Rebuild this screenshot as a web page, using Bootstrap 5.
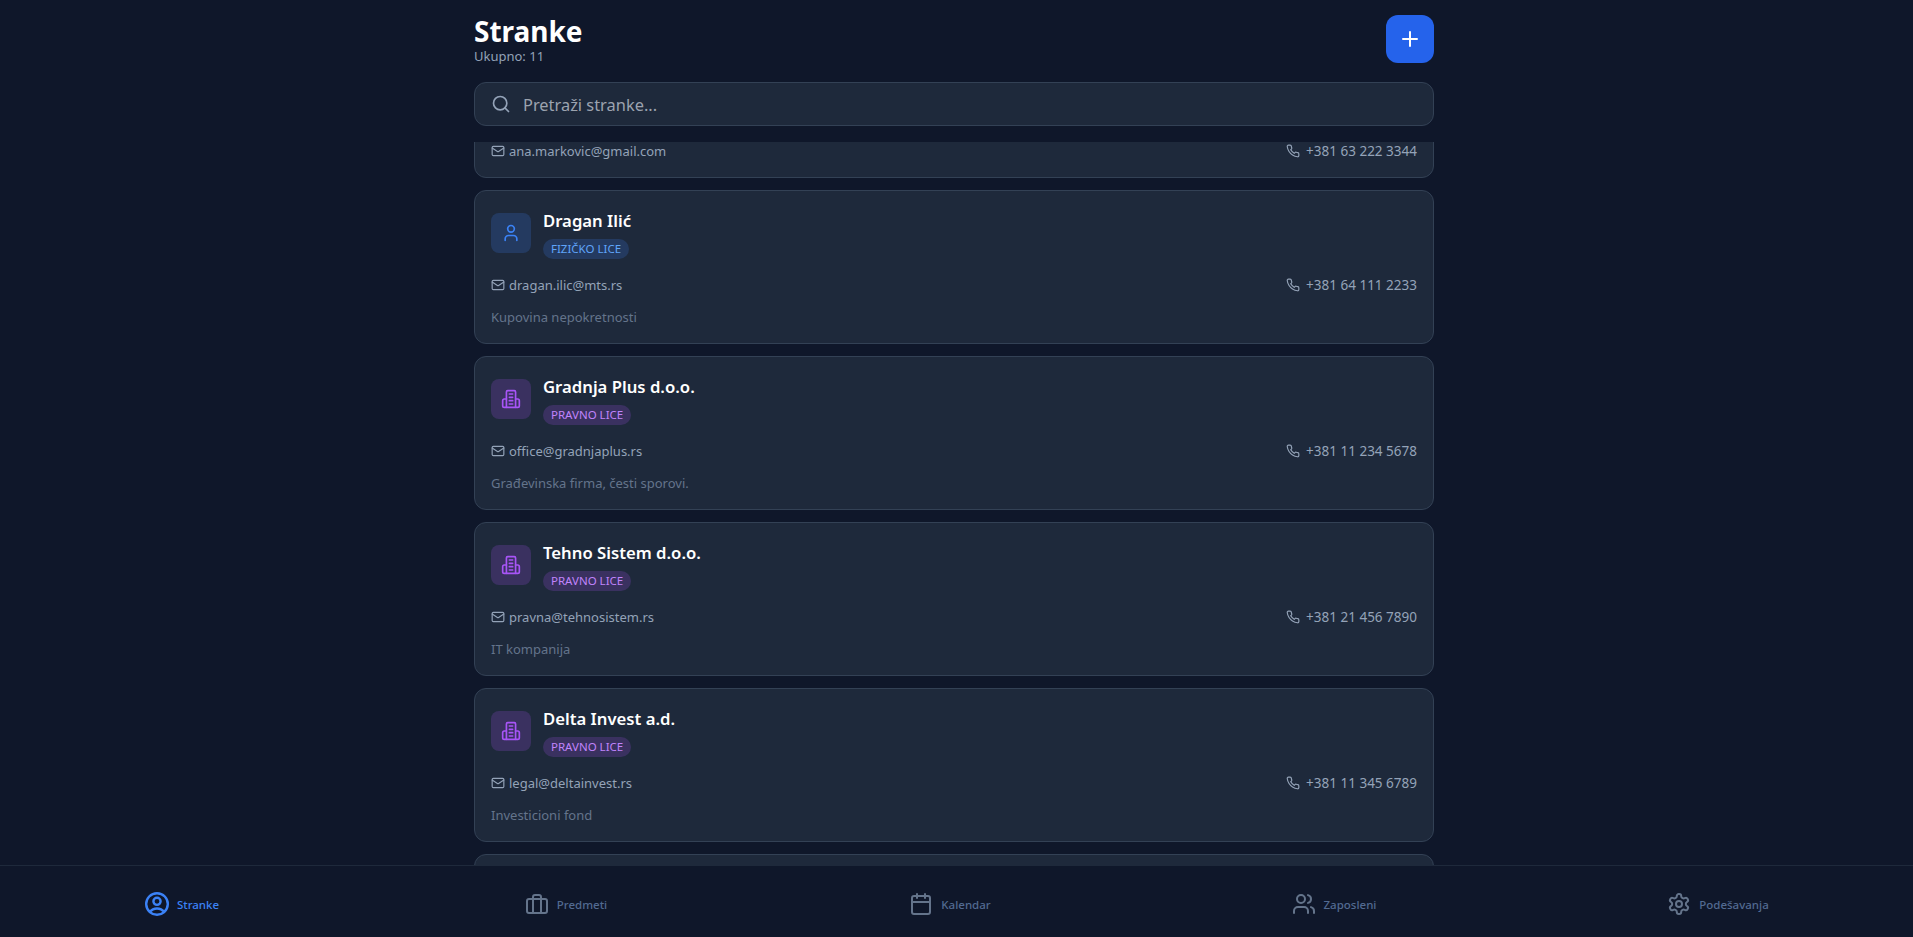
<!doctype html>
<html lang="sr">
<head>
  <meta charset="utf-8">
  <meta name="viewport" content="width=device-width, initial-scale=1">
  <title>Stranke</title>
  <link href="https://cdn.jsdelivr.net/npm/bootstrap@5.3.5/dist/css/bootstrap.min.css" rel="stylesheet">
  <style>
    html, body { height: 100%; overflow: hidden; }
    body { background: #0f172a; font-family: "Noto Sans", "Open Sans", sans-serif; color: #fff; }
    .ico { fill: none; stroke: currentColor; stroke-width: 2; stroke-linecap: round; stroke-linejoin: round; flex-shrink: 0; }

    .app-shell { height: 937px; }
    .app-main { padding-right: 5px; min-height: 0; }
    .app-column { width: 960px; }

    .page-head { padding-top: 14px; height: 82px; flex-shrink: 0; }
    .page-title { font-size: 28px; font-weight: 700; line-height: 34px; margin: 0; }
    .page-count { font-size: 13px; line-height: 17px; color: #94a3b8; }
    .add-btn { width: 48px; height: 48px; margin-top: 1px; background: #2563eb; border: 0; border-radius: 12px; color: #fff; }
    .add-btn:hover { background: #2563eb; color: #fff; }

    .search-box { margin-bottom: 16px; flex-shrink: 0; }
    .search-input.form-control { height: 44px; padding-left: 48px; font-size: 16.4px; background: #1e293b; border: 1px solid #334155; border-radius: 12px; color: #fff; }
    .search-input.form-control::placeholder { color: #9ca3af; opacity: 1; }
    .search-ico { left: 17px; top: 12px; color: #94a3b8; }

    .client-list { overflow-y: auto; scrollbar-width: none; min-height: 0; }
    .client-card { background: #1e293b; border: 1px solid #334155; border-radius: 12px; padding: 16px; margin-bottom: 12px; }
    .client-blank { height: 154px; }
    .client-avatar { width: 40px; height: 40px; border-radius: 8px; }
    .avatar-person { background: rgba(59, 130, 246, .2); color: #3b82f6; }
    .avatar-company { background: rgba(168, 85, 247, .2); color: #a855f7; }
    .client-name { font-size: 16.7px; font-weight: 600; line-height: 27px; margin: 0 0 5px; color: #fff; }
    .client-type { font-size: 11.5px; line-height: 20px; height: 20px; padding: 0 8px; border-radius: 10px; text-transform: uppercase; }
    .type-person { background: rgba(59, 130, 246, .2); color: #60a5fa; }
    .type-company { background: rgba(168, 85, 247, .2); color: #c084fc; }
    .client-contact { margin-top: 16px; font-size: 13px; line-height: 20px; color: #94a3b8; }
    .client-phone { font-size: 13.5px; gap: 6px; }
    .client-note { margin-top: 12px; font-size: 13px; line-height: 20px; color: #64748b; }

    .tab-bar { height: 72px; flex-shrink: 0; background: #0f172a; border-top: 1px solid #1e293b; overflow: hidden; }
    .tab-row { width: 1920px; margin-left: -10px; height: 100%; padding-top: 4px; }
    .tab-item { width: 384px; gap: 8px; font-size: 11.5px; font-weight: 500; color: #64748b; text-decoration: none; }
    .tab-item.tab-active { color: #3b82f6; }
    .tab-item span { color: #526a91; padding-top: 2px; }
    .tab-item.tab-active span { color: #3b82f6; }
  </style>
</head>
<body>
  <svg width="0" height="0" class="position-absolute">
    <symbol id="i-plus" viewBox="0 0 24 24"><path d="M5 12h14M12 5v14"/></symbol>
    <symbol id="i-search" viewBox="0 0 24 24"><circle cx="11" cy="11" r="8"/><path d="m21 21-4.300-4.300"/></symbol>
    <symbol id="i-mail" viewBox="0 0 24 24"><rect x="2" y="4" width="20" height="16" rx="2"/><path d="m22 7-8.970 5.700a1.940 1.940 0 0 1-2.060 0L2 7"/></symbol>
    <symbol id="i-phone" viewBox="0 0 24 24"><path d="M22 16.920v3a2 2 0 0 1-2.180 2 19.790 19.790 0 0 1-8.630-3.070 19.500 19.500 0 0 1-6-6 19.790 19.790 0 0 1-3.070-8.670A2 2 0 0 1 4.110 2h3a2 2 0 0 1 2 1.720 12.840 12.840 0 0 0 .7 2.810 2 2 0 0 1-.45 2.110L8.090 9.910a16 16 0 0 0 6 6l1.270-1.270a2 2 0 0 1 2.110-.45 12.840 12.840 0 0 0 2.810.7A2 2 0 0 1 22 16.920z"/></symbol>
    <symbol id="i-user" viewBox="0 0 24 24"><path d="M19 21v-2a4 4 0 0 0-4-4H9a4 4 0 0 0-4 4v2"/><circle cx="12" cy="7" r="4"/></symbol>
    <symbol id="i-building" viewBox="0 0 24 24"><path d="M6.500 22V3.500a1.500 1.500 0 0 1 1.500-1.500h8a1.500 1.500 0 0 1 1.500 1.500V22Z"/><path d="M6.500 12H4a2 2 0 0 0-2 2v6a2 2 0 0 0 2 2h2.500"/><path d="M17.500 12H20a2 2 0 0 1 2 2v6a2 2 0 0 1-2 2h-2.500"/><path d="M10 6h4M10 10h4M10 14h4M10 18h4"/></symbol>
    <symbol id="i-circle-user" viewBox="2 2 20 20"><path d="M17.982 18.725A7.488 7.488 0 0 0 12 15.750a7.488 7.488 0 0 0-5.982 2.975m11.964 0a9 9 0 1 0-11.963 0m11.963 0A8.966 8.966 0 0 1 12 21a8.966 8.966 0 0 1-5.982-2.275M15 9.750a3 3 0 1 1-6 0 3 3 0 0 1 6 0Z"/></symbol>
    <symbol id="i-briefcase" viewBox="0 0 24 24"><rect x="2" y="7" width="20" height="14" rx="2"/><path d="M16 21V5a2 2 0 0 0-2-2h-4a2 2 0 0 0-2 2v16"/></symbol>
    <symbol id="i-calendar" viewBox="0 0 24 24"><path d="M8 2v4M16 2v4"/><rect x="3" y="4" width="18" height="18" rx="2"/><path d="M3 10h18"/></symbol>
    <symbol id="i-users" viewBox="0 0 24 24"><path d="M16 21v-2a4 4 0 0 0-4-4H6a4 4 0 0 0-4 4v2"/><circle cx="9" cy="7" r="4"/><path d="M22 21v-2a4 4 0 0 0-3-3.870"/><path d="M16 3.130a4 4 0 0 1 0 7.750"/></symbol>
    <symbol id="i-gear" viewBox="0 0 24 24"><path d="M12.220 2h-.44a2 2 0 0 0-2 2v.18a2 2 0 0 1-1 1.730l-.43.25a2 2 0 0 1-2 0l-.15-.08a2 2 0 0 0-2.730.73l-.22.38a2 2 0 0 0 .73 2.730l.15.1a2 2 0 0 1 1 1.720v.51a2 2 0 0 1-1 1.740l-.15.09a2 2 0 0 0-.73 2.730l.22.38a2 2 0 0 0 2.730.73l.15-.08a2 2 0 0 1 2 0l.43.25a2 2 0 0 1 1 1.730V20a2 2 0 0 0 2 2h.44a2 2 0 0 0 2-2v-.18a2 2 0 0 1 1-1.730l.43-.25a2 2 0 0 1 2 0l.15.08a2 2 0 0 0 2.730-.73l.22-.39a2 2 0 0 0-.73-2.730l-.15-.08a2 2 0 0 1-1-1.740v-.5a2 2 0 0 1 1-1.740l.15-.09a2 2 0 0 0 .73-2.730l-.22-.38a2 2 0 0 0-2.730-.73l-.15.08a2 2 0 0 1-2 0l-.43-.25a2 2 0 0 1-1-1.730V4a2 2 0 0 0-2-2z"/><circle cx="12" cy="12" r="3"/></symbol>
  </svg>

  <div class="app-shell d-flex flex-column">
    <main class="app-main flex-grow-1 d-flex justify-content-center">
      <div class="app-column d-flex flex-column">
        <header class="page-head d-flex justify-content-between align-items-start">
          <div>
            <h1 class="page-title">Stranke</h1>
            <div class="page-count">Ukupno: 11</div>
          </div>
          <button type="button" class="btn add-btn d-flex align-items-center justify-content-center p-0" aria-label="Dodaj">
            <svg class="ico" width="24" height="24"><use href="#i-plus"/></svg>
          </button>
        </header>

        <div class="search-box position-relative">
          <svg class="ico search-ico position-absolute" width="20" height="20"><use href="#i-search"/></svg>
          <input type="text" class="form-control search-input" placeholder="Pretraži stranke...">
        </div>

        <div class="client-list flex-grow-1" id="client-list">
          <article class="client-card">
            <div class="d-flex align-items-center">
              <div class="client-avatar avatar-person d-flex align-items-center justify-content-center">
                <svg class="ico" width="20" height="20"><use href="#i-user"/></svg>
              </div>
              <div class="ms-2 ps-1 d-flex flex-column align-items-start">
                <h2 class="client-name">Ana Marković</h2>
                <span class="client-type type-person">Fizičko lice</span>
              </div>
            </div>
            <div class="client-contact d-flex justify-content-between">
              <div class="d-flex align-items-center gap-1"><svg class="ico" width="14" height="14"><use href="#i-mail"/></svg>ana.markovic@gmail.com</div>
              <div class="client-phone d-flex align-items-center"><svg class="ico" width="14" height="14"><use href="#i-phone"/></svg>+381 63 222 3344</div>
            </div>
          </article>

          <article class="client-card">
            <div class="d-flex align-items-center">
              <div class="client-avatar avatar-person d-flex align-items-center justify-content-center">
                <svg class="ico" width="20" height="20"><use href="#i-user"/></svg>
              </div>
              <div class="ms-2 ps-1 d-flex flex-column align-items-start">
                <h2 class="client-name">Dragan Ilić</h2>
                <span class="client-type type-person">Fizičko lice</span>
              </div>
            </div>
            <div class="client-contact d-flex justify-content-between">
              <div class="d-flex align-items-center gap-1"><svg class="ico" width="14" height="14"><use href="#i-mail"/></svg>dragan.ilic@mts.rs</div>
              <div class="client-phone d-flex align-items-center"><svg class="ico" width="14" height="14"><use href="#i-phone"/></svg>+381 64 111 2233</div>
            </div>
            <div class="client-note">Kupovina nepokretnosti</div>
          </article>

          <article class="client-card">
            <div class="d-flex align-items-center">
              <div class="client-avatar avatar-company d-flex align-items-center justify-content-center">
                <svg class="ico" width="20" height="20"><use href="#i-building"/></svg>
              </div>
              <div class="ms-2 ps-1 d-flex flex-column align-items-start">
                <h2 class="client-name">Gradnja Plus d.o.o.</h2>
                <span class="client-type type-company">Pravno lice</span>
              </div>
            </div>
            <div class="client-contact d-flex justify-content-between">
              <div class="d-flex align-items-center gap-1"><svg class="ico" width="14" height="14"><use href="#i-mail"/></svg>office@gradnjaplus.rs</div>
              <div class="client-phone d-flex align-items-center"><svg class="ico" width="14" height="14"><use href="#i-phone"/></svg>+381 11 234 5678</div>
            </div>
            <div class="client-note">Građevinska firma, česti sporovi.</div>
          </article>

          <article class="client-card">
            <div class="d-flex align-items-center">
              <div class="client-avatar avatar-company d-flex align-items-center justify-content-center">
                <svg class="ico" width="20" height="20"><use href="#i-building"/></svg>
              </div>
              <div class="ms-2 ps-1 d-flex flex-column align-items-start">
                <h2 class="client-name">Tehno Sistem d.o.o.</h2>
                <span class="client-type type-company">Pravno lice</span>
              </div>
            </div>
            <div class="client-contact d-flex justify-content-between">
              <div class="d-flex align-items-center gap-1"><svg class="ico" width="14" height="14"><use href="#i-mail"/></svg>pravna@tehnosistem.rs</div>
              <div class="client-phone d-flex align-items-center"><svg class="ico" width="14" height="14"><use href="#i-phone"/></svg>+381 21 456 7890</div>
            </div>
            <div class="client-note">IT kompanija</div>
          </article>

          <article class="client-card">
            <div class="d-flex align-items-center">
              <div class="client-avatar avatar-company d-flex align-items-center justify-content-center">
                <svg class="ico" width="20" height="20"><use href="#i-building"/></svg>
              </div>
              <div class="ms-2 ps-1 d-flex flex-column align-items-start">
                <h2 class="client-name">Delta Invest a.d.</h2>
                <span class="client-type type-company">Pravno lice</span>
              </div>
            </div>
            <div class="client-contact d-flex justify-content-between">
              <div class="d-flex align-items-center gap-1"><svg class="ico" width="14" height="14"><use href="#i-mail"/></svg>legal@deltainvest.rs</div>
              <div class="client-phone d-flex align-items-center"><svg class="ico" width="14" height="14"><use href="#i-phone"/></svg>+381 11 345 6789</div>
            </div>
            <div class="client-note">Investicioni fond</div>
          </article>

          <article class="client-card client-blank"></article>
        </div>
      </div>
    </main>

    <nav class="tab-bar">
      <div class="tab-row d-flex">
        <a class="tab-item tab-active d-flex align-items-center justify-content-center" href="#"><svg class="ico" width="24" height="24"><use href="#i-circle-user"/></svg><span>Stranke</span></a>
        <a class="tab-item d-flex align-items-center justify-content-center" href="#"><svg class="ico" width="24" height="24"><use href="#i-briefcase"/></svg><span>Predmeti</span></a>
        <a class="tab-item d-flex align-items-center justify-content-center" href="#"><svg class="ico" width="24" height="24"><use href="#i-calendar"/></svg><span>Kalendar</span></a>
        <a class="tab-item d-flex align-items-center justify-content-center" href="#"><svg class="ico" width="24" height="24"><use href="#i-users"/></svg><span>Zaposleni</span></a>
        <a class="tab-item d-flex align-items-center justify-content-center" href="#"><svg class="ico" width="24" height="24"><use href="#i-gear"/></svg><span>Podešavanja</span></a>
      </div>
    </nav>
  </div>

  <script>
    document.querySelector('#client-list').scrollTop = 86;
  </script>
  <script src="https://cdn.jsdelivr.net/npm/bootstrap@5.3.5/dist/js/bootstrap.bundle.min.js"></script>
</body>
</html>
